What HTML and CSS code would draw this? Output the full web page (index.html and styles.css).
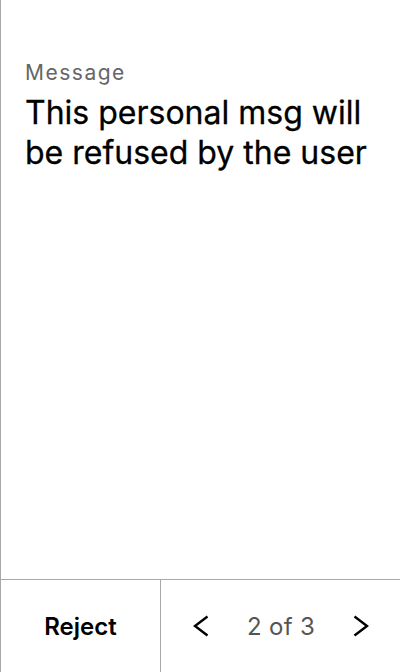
FILE: index.html
```html
<!DOCTYPE html>
<html>
<head>
<meta charset="utf-8">
<link rel="stylesheet" href="styles.css">
</head>
<body>
<div class="screen">
  <main class="content">
    <div class="label">Message</div>
    <div class="message">This personal msg will be refused by the user</div>
  </main>
  <footer class="footer">
    <button class="reject">Reject</button>
    <div class="pager">
      <svg class="chev" width="16" height="22" viewBox="0 0 16 22"><path d="M14.5 1.5 L2 11 L14.5 20.5" fill="none" stroke="#000" stroke-width="2.4"/></svg>
      <span class="count">2 of 3</span>
      <svg class="chev" width="16" height="22" viewBox="0 0 16 22"><path d="M1.5 1.5 L14 11 L1.5 20.5" fill="none" stroke="#000" stroke-width="2.4"/></svg>
    </div>
  </footer>
</div>
</body>
</html>
```
FILE: styles.css
```css
html, body { margin: 0; padding: 0; background: #fff; }
body { font-family: Inter, "Noto Sans", sans-serif; }
.screen {
  height: 672px;
  border-left: 1px solid #a8a8a8;
  display: flex;
  flex-direction: column;
  box-sizing: border-box;
}
.content { flex: 1; padding: 58px 24px 0 24px; }
.label { font-size: 21px; color: #666; line-height: 30px; letter-spacing: 1.5px; }
.message { font-size: 32px; color: #000; line-height: 40px; margin-top: 5px; font-weight: 400; -webkit-text-stroke: 0.3px #000; }
.footer {
  height: 92px;
  border-top: 1px solid #a8a8a8;
  display: flex;
}
.reject {
  width: 160px;
  border: none;
  border-right: 1px solid #a8a8a8;
  background: #fff;
  font-family: inherit;
  font-size: 24px;
  font-weight: 600;
  color: #000;
  padding: 0;
}
.pager {
  flex: 1;
  display: flex;
  align-items: center;
  justify-content: space-between;
  padding: 0 31px 0 32px;
}
.count { font-size: 24px; color: #555; letter-spacing: 0.3px; }
.chev { display: block; }
```
